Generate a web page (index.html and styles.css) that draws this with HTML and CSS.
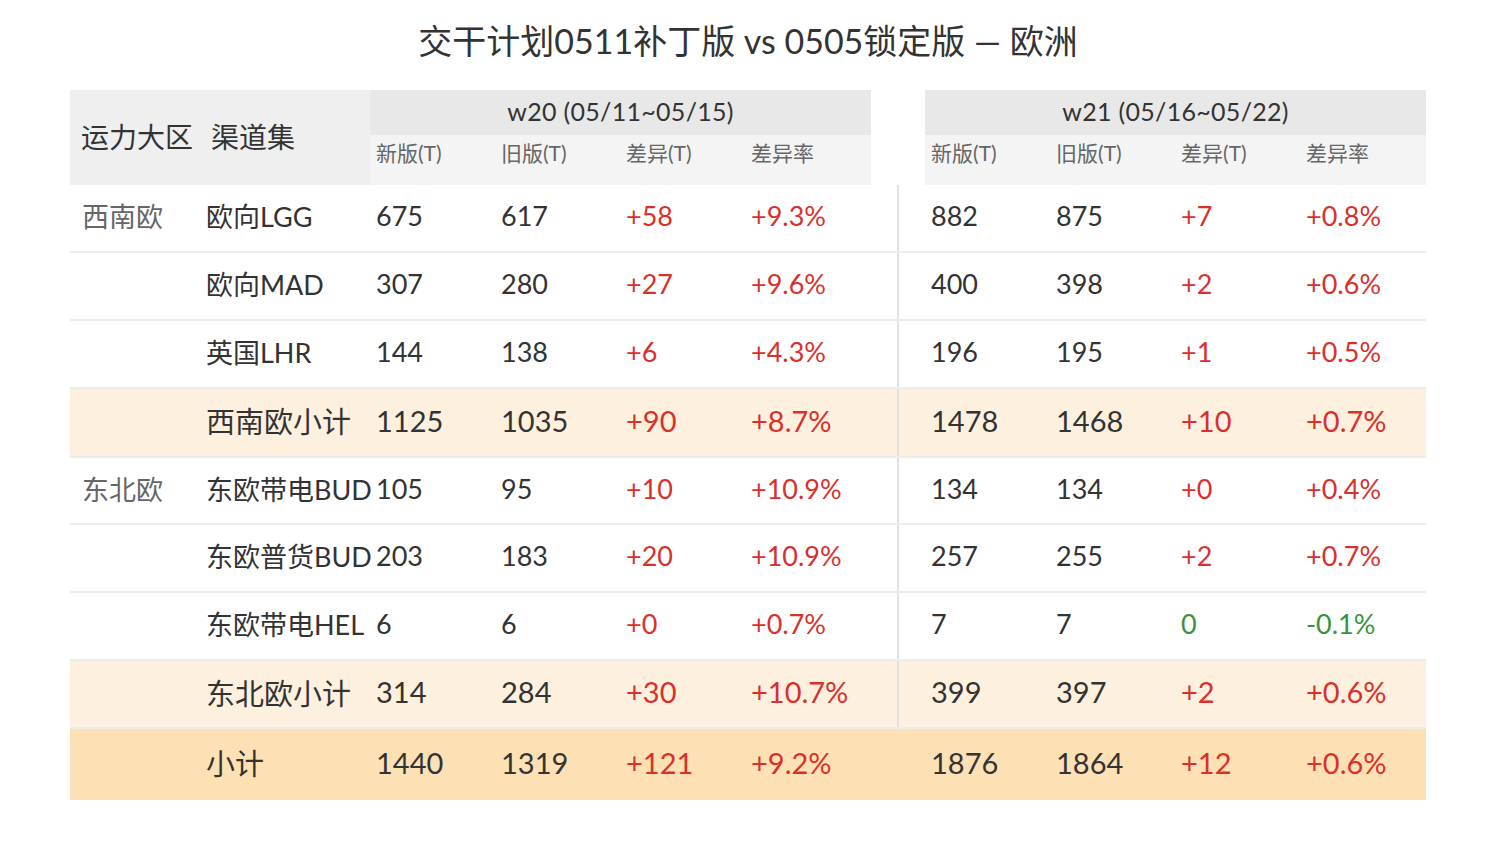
FILE: index.html
```html
<!DOCTYPE html>
<html lang="zh">
<head>
<meta charset="utf-8">
<title>交干计划0511补丁版 vs 0505锁定版 — 欧洲</title>
<link rel="stylesheet" href="styles.css">
</head>
<body>
<div class="page">
  <h1 class="title">交干计划0511补丁版 vs 0505锁定版 — 欧洲</h1>
  <table class="grid">
    <colgroup>
      <col class="c-region"><col class="c-channel">
      <col class="c-num"><col class="c-num"><col class="c-num"><col class="c-num4">
      <col class="c-gap">
      <col class="c-num"><col class="c-num"><col class="c-num"><col class="c-num4">
    </colgroup>
    <thead>
      <tr class="h1">
        <th class="corner region" rowspan="2">运力大区</th>
        <th class="corner channel" rowspan="2">渠道集</th>
        <th class="week" colspan="4">w20 (05/11~05/15)</th>
        <th class="gap" rowspan="2"></th>
        <th class="week" colspan="4">w21 (05/16~05/22)</th>
      </tr>
      <tr class="h2">
        <th class="sub">新版(T)</th><th class="sub">旧版(T)</th><th class="sub">差异(T)</th><th class="sub">差异率</th>
        <th class="sub">新版(T)</th><th class="sub">旧版(T)</th><th class="sub">差异(T)</th><th class="sub">差异率</th>
      </tr>
    </thead>
    <tbody>
      <tr class="row short">
        <td class="region">西南欧</td><td class="channel">欧向LGG</td>
        <td>675</td><td>617</td><td class="up">+58</td><td class="up">+9.3%</td>
        <td class="gap line"></td>
        <td>882</td><td>875</td><td class="up">+7</td><td class="up">+0.8%</td>
      </tr>
      <tr class="row">
        <td class="region"></td><td class="channel">欧向MAD</td>
        <td>307</td><td>280</td><td class="up">+27</td><td class="up">+9.6%</td>
        <td class="gap line"></td>
        <td>400</td><td>398</td><td class="up">+2</td><td class="up">+0.6%</td>
      </tr>
      <tr class="row">
        <td class="region"></td><td class="channel">英国LHR</td>
        <td>144</td><td>138</td><td class="up">+6</td><td class="up">+4.3%</td>
        <td class="gap line"></td>
        <td>196</td><td>195</td><td class="up">+1</td><td class="up">+0.5%</td>
      </tr>
      <tr class="row subtotal tall">
        <td class="region"></td><td class="channel">西南欧小计</td>
        <td>1125</td><td>1035</td><td class="up">+90</td><td class="up">+8.7%</td>
        <td class="gap line"></td>
        <td>1478</td><td>1468</td><td class="up">+10</td><td class="up">+0.7%</td>
      </tr>
      <tr class="row short">
        <td class="region">东北欧</td><td class="channel">东欧带电BUD</td>
        <td>105</td><td>95</td><td class="up">+10</td><td class="up">+10.9%</td>
        <td class="gap line"></td>
        <td>134</td><td>134</td><td class="up">+0</td><td class="up">+0.4%</td>
      </tr>
      <tr class="row">
        <td class="region"></td><td class="channel">东欧普货BUD</td>
        <td>203</td><td>183</td><td class="up">+20</td><td class="up">+10.9%</td>
        <td class="gap line"></td>
        <td>257</td><td>255</td><td class="up">+2</td><td class="up">+0.7%</td>
      </tr>
      <tr class="row">
        <td class="region"></td><td class="channel">东欧带电HEL</td>
        <td>6</td><td>6</td><td class="up">+0</td><td class="up">+0.7%</td>
        <td class="gap line"></td>
        <td>7</td><td>7</td><td class="down">0</td><td class="down">-0.1%</td>
      </tr>
      <tr class="row subtotal">
        <td class="region"></td><td class="channel">东北欧小计</td>
        <td>314</td><td>284</td><td class="up">+30</td><td class="up">+10.7%</td>
        <td class="gap line"></td>
        <td>399</td><td>397</td><td class="up">+2</td><td class="up">+0.6%</td>
      </tr>
      <tr class="row total">
        <td class="region"></td><td class="channel">小计</td>
        <td>1440</td><td>1319</td><td class="up">+121</td><td class="up">+9.2%</td>
        <td class="gap"></td>
        <td>1876</td><td>1864</td><td class="up">+12</td><td class="up">+0.6%</td>
      </tr>
    </tbody>
  </table>
</div>
</body>
</html>
```
FILE: styles.css
```css
html, body {
  margin: 0;
  padding: 0;
  background: #ffffff;
}

.page {
  padding: 0 69px 0 70px;
  font-family: "Lato", "Noto Sans CJK SC", "DejaVu Sans", sans-serif;
  color: #333333;
}

.title {
  margin: 0;
  height: 90px;
  padding-top: 19px;
  box-sizing: border-box;
  text-align: center;
  font-size: 34px;
  font-weight: 400;
  line-height: 44px;
  color: #333333;
  white-space: nowrap;
}

.grid {
  width: 1356px;
  table-layout: fixed;
  border-collapse: collapse;
  border-spacing: 0;
}

.c-region { width: 130px; }
.c-channel { width: 170px; }
.c-num { width: 125px; }
.c-num4 { width: 126px; }
.c-gap { width: 54px; }

th, td {
  padding: 0 0 0 6px;
  text-align: left;
  font-weight: 400;
  white-space: nowrap;
}

/* header */
.h1 { height: 45px; }
.h2 { height: 50px; }

.corner {
  background: #efefef;
  font-size: 28px;
  color: #333333;
  vertical-align: middle;
  padding-bottom: 4px;
}
.corner.region { padding-left: 11px; }
.corner.channel { padding-left: 11px; }

.week {
  background: #e8e8e8;
  text-align: center;
  font-size: 25px;
  letter-spacing: 0.3px;
  color: #333333;
  padding: 0 0 4px 0;
  vertical-align: middle;
}

.sub {
  background: #f4f4f4;
  font-size: 21px;
  color: #666666;
  vertical-align: top;
  padding-top: 4px;
  line-height: 28px;
}

th.gap { background: #ffffff; padding: 0; }

/* body */
.row { height: 68px; }
.row.short { height: 67px; }
.row td {
  font-size: 27px;
  color: #333333;
  vertical-align: middle;
  padding-bottom: 5px;
  border-bottom: 2px solid #ececec;
}

td.region {
  padding-left: 12px;
  color: #666666;
}

td.gap { padding: 0; }
td.line {
  background-image: linear-gradient(to right, transparent 26px, #e2e2e2 26px, #e2e2e2 28px, transparent 28px);
}

.subtotal { height: 68px; }
.subtotal.tall { height: 69px; }
.subtotal td {
  background-color: #fef0de;
  font-size: 29px;
}

.total { height: 72px; }
.total td {
  background-color: #fde0b4;
  font-size: 29px;
  border-bottom: none;
}

.row td.up { color: #d9302c; }
.row td.down { color: #3a923a; }
```
